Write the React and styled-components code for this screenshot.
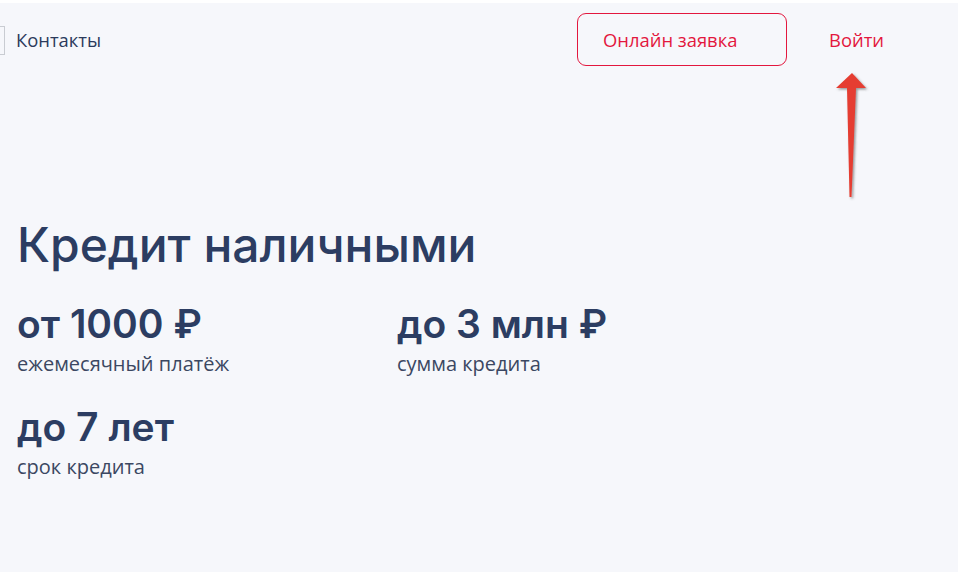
import React from "react";
import styled, { createGlobalStyle } from "styled-components";

const Global = createGlobalStyle`
  html, body { margin: 0; padding: 0; }
  body { background: #f6f7fb; font-family: "Open Sans", "Noto Sans", sans-serif; }
`;

const Page = styled.div`
  position: relative;
  min-height: 572px;
  box-sizing: border-box;
  border-top: 3px solid #ffffff;
  background: #f6f7fb;
  overflow: hidden;
`;

const Header = styled.header`
  display: flex;
  align-items: center;
  justify-content: space-between;
  height: 52px;
  margin-top: 10px;
  padding-right: 74px;
`;

const LeftNav = styled.nav`
  display: flex;
  align-items: center;
  gap: 11px;
`;

const CutBox = styled.span`
  display: block;
  width: 30px;
  height: 29px;
  margin-left: -25px;
  border: 1px solid #c9ccd2;
  box-sizing: border-box;
  margin-top: 2px;
`;

const NavLink = styled.a`
  font-family: "Open Sans", sans-serif;
  font-size: 18.4px;
  font-weight: 500;
  color: ${(p) => (p.$accent ? "#e3173e" : "#2b3a5c")};
  text-decoration: none;
`;

const RightNav = styled.div`
  display: flex;
  align-items: center;
  gap: 42px;
`;

const OutlineButton = styled.button`
  width: 210px;
  height: 53px;
  box-sizing: border-box;
  border: 1px solid #e3173e;
  border-radius: 9px;
  background: transparent;
  color: #e3173e;
  font-family: "Open Sans", sans-serif;
  font-size: 18.4px;
  font-weight: 500;
  text-align: left;
  padding: 0 0 0 25px;
`;

const Main = styled.main`
  padding: 0 0 0 17px;
  margin-top: 150px;
`;

const Title = styled.h1`
  margin: 0;
  font-family: Inter, "Noto Sans", sans-serif;
  font-size: 48px;
  font-weight: 500;
  line-height: 60px;
  color: #2c3d62;
`;

const Stats = styled.div`
  display: grid;
  grid-template-columns: 380px 380px;
  row-gap: 25px;
  margin-top: 25px;
`;

const Stat = styled.div`
  display: flex;
  flex-direction: column;
`;

const Value = styled.div`
  font-family: Inter, "Noto Sans", sans-serif;
  font-size: 39px;
  font-weight: 600;
  line-height: 48px;
  color: #2c3d62;
`;

const Caption = styled.div`
  font-family: "Open Sans", sans-serif;
  font-size: 20px;
  line-height: 28px;
  color: #3b4762;
  margin-top: 2px;
`;

const Arrow = styled.svg`
  position: absolute;
  left: 830px;
  top: 66px;
  width: 42px;
  height: 136px;
`;

const stats = [
  { v: "от 1000 ₽", c: "ежемесячный платёж" },
  { v: "до 3 млн ₽", c: "сумма кредита" },
  { v: "до 7 лет", c: "срок кредита" },
];

export default function App() {
  return (
    <>
      <Global />
      <Page>
        <Header>
          <LeftNav>
            <CutBox />
            <NavLink>Контакты</NavLink>
          </LeftNav>
          <RightNav>
            <OutlineButton>Онлайн заявка</OutlineButton>
            <NavLink $accent>Войти</NavLink>
          </RightNav>
        </Header>
        <Main>
          <Title>Кредит наличными</Title>
          <Stats>
            {stats.map((s) => (
              <Stat key={s.v}>
                <Value>{s.v}</Value>
                <Caption>{s.c}</Caption>
              </Stat>
            ))}
          </Stats>
        </Main>
        <Arrow viewBox="0 0 42 136">
          <defs>
            <filter id="sh" x="-50%" y="-20%" width="200%" height="140%">
              <feDropShadow dx="1.5" dy="1.5" stdDeviation="0.8" floodColor="#555" floodOpacity="0.6" />
            </filter>
          </defs>
          <path
            d="M22 4 L36 19 L26 19 L21.5 128 L19.5 128 L17 19 L6 19 Z"
            fill="#e53e31"
            filter="url(#sh)"
          />
        </Arrow>
      </Page>
    </>
  );
}
